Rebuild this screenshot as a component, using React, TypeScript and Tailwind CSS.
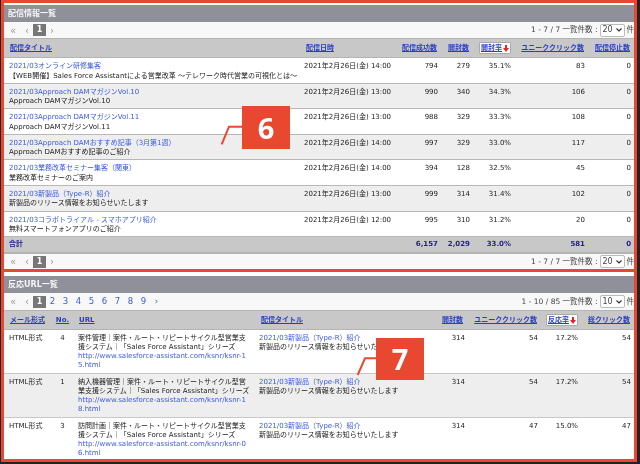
const font = { fontFamily: '"DejaVu Sans","Noto Sans CJK JP",sans-serif' };

const H = "text-[#2a3fc0] underline font-bold text-[7px] whitespace-nowrap";

function Pager({ pages, range, size, className }: { pages?: boolean; range: string; size: string; className: string }) {
  return (
    <div className={`${className} flex items-center bg-[#f8f8f8] text-[7.5px] text-[#444]`}>
      <span className="ml-[6px] w-[15px] text-[#999] text-[10px]">«</span>
      <span className="w-[8px] text-[#999] text-[10px]">‹</span>
      <span className="w-[13px] h-[12px] bg-[#777] text-white font-bold text-[8px] flex items-center justify-center">1</span>
      {pages ? (
        <div className="flex text-[#3a5be0] text-[8.5px]">
          {[2, 3, 4, 5, 6, 7, 8, 9].map((n) => (
            <span key={n} className="w-[13px] text-center">{n}</span>
          ))}
          <span className="w-[13px] text-center">›</span>
        </div>
      ) : (
        <span className="ml-[4px] text-[#999] text-[10px]">›</span>
      )}
      <span className="ml-auto whitespace-nowrap">{range} 一覧件数 :</span>
      <span className="ml-[2px] w-[25px] h-[13px] border border-[#bbb] rounded-[2px] bg-white flex items-center justify-between px-[2px] text-[8px]">
        {size}
        <svg width="6" height="4" viewBox="0 0 6 4"><path d="M0.5 0.5 L3 3 L5.5 0.5" fill="none" stroke="#333" strokeWidth="1.2" /></svg>
      </span>
      <span className="ml-[2px]">件</span>
    </div>
  );
}

function Sorted({ label }: { label: string }) {
  return (
    <span className="inline-flex items-center justify-center h-[12px] w-[32px] gap-[1px] border border-[#aaa] rounded-[1px] bg-white">
      <span className={H}>{label}</span>
      <svg width="6" height="7" viewBox="0 0 6 7"><path d="M2 0 H4 V3 H6 L3 7 L0 3 H2 Z" fill="#e8202a" /></svg>
    </span>
  );
}

function Bar({ title }: { title: string }) {
  return <div className="h-[17px] bg-[#90909a] text-[#f4f4f4] font-bold text-[8px] flex items-center pl-[4px]">{title}</div>;
}

const rows1 = [
  ["2021/03オンライン研修集客", "【WEB開催】Sales Force Assistantによる営業改革 ～テレワーク時代営業の可視化とは～", "14:00", "794", "279", "35.1%", "83"],
  ["2021/03Approach DAMマガジンVol.10", "Approach DAMマガジンVol.10", "13:00", "990", "340", "34.3%", "106"],
  ["2021/03Approach DAMマガジンVol.11", "Approach DAMマガジンVol.11", "13:00", "988", "329", "33.3%", "108"],
  ["2021/03Approach DAMおすすめ記事（3月第1週）", "Approach DAMおすすめ記事のご紹介", "14:00", "997", "329", "33.0%", "117"],
  ["2021/03業務改革セミナー集客（関東）", "業務改革セミナーのご案内", "14:00", "394", "128", "32.5%", "45"],
  ["2021/03新製品（Type-R）紹介", "新製品のリリース情報をお知らせいたします", "13:00", "999", "314", "31.4%", "102"],
  ["2021/03コラボトライアル - スマホアプリ紹介", "無料スマートフォンアプリのご紹介", "12:00", "995", "310", "31.2%", "20"],
];

const cols1 = "grid grid-cols-[298px_96px_40px_32px_41px_74px_49px]";

const rows2 = [
  ["HTML形式", "4", "案件管理｜案件・ルート・リピートサイクル型営業支援システム｜「Sales Force Assistant」シリーズ", "http://www.salesforce-assistant.com/ksnr/ksnr-15.html", "54", "17.2%", "54"],
  ["HTML形式", "1", "納入機器管理｜案件・ルート・リピートサイクル型営業支援システム｜「Sales Force Assistant」シリーズ", "http://www.salesforce-assistant.com/ksnr/ksnr-18.html", "54", "17.2%", "54"],
  ["HTML形式", "3", "訪問計画｜案件・ルート・リピートサイクル型営業支援システム｜「Sales Force Assistant」シリーズ", "http://www.salesforce-assistant.com/ksnr/ksnr-06.html", "47", "15.0%", "47"],
];

const cols2 = "grid grid-cols-[48px_21px_181px_165px_46px_73px_40px_56px]";

function Callout({ n, className, line }: { n: string; className: string; line: string }) {
  return (
    <div className={`absolute w-[48px] bg-[#e8482f] text-white font-bold text-[29px] flex items-center justify-center ${className}`} style={{ fontFamily: '"Noto Sans",sans-serif' }}>
      {n}
      <svg className="absolute left-[-24px] top-0" width="24" height="43" viewBox="0 0 24 43"><path d={line} fill="none" stroke="#e8482f" strokeWidth="2" /></svg>
    </div>
  );
}

export default function App() {
  return (
    <div className="relative w-[640px] h-[464px] overflow-hidden bg-white text-[7px] text-[#222] border-l border-r-[3px] border-b-2 border-[#222] flex flex-col blur-[0.25px]" style={font}>
      <section className="border-[3px] border-[#e8482f] pt-[2px] bg-white">
        <Bar title="配信情報一覧" />
        <Pager className="h-[16px]" range="1 - 7 / 7" size="20" />
        <div className={`${cols1} h-[20px] items-center bg-[#c8c8c8] border-y border-[#b4b4b4] text-right`}>
          <span className={`${H} text-left pl-[6px]`}>配信タイトル</span>
          <span className={`${H} text-left pl-[4px]`}>配信日時</span>
          <span className={`${H} pr-[1px]`}>配信成功数</span>
          <span className={`${H} pr-[1px]`}>開封数</span>
          <span className="flex justify-end"><Sorted label="開封率" /></span>
          <span className={`${H} pr-[1px]`}>ユニーククリック数</span>
          <span className={`${H} pr-[4px]`}>配信停止数</span>
        </div>
        {rows1.map((r, i) => (
          <div key={i} className={`${cols1} h-[25.6px] border-b border-[#b8b8b8] leading-[9.5px] pt-[4px] text-right ${i % 2 ? "bg-[#eeeeee]" : "bg-white"}`}>
            <div className="text-left pl-[5px] whitespace-nowrap">
              <div className="text-[#3a5be0]">{r[0]}</div>
              <div>{r[1]}</div>
            </div>
            <span className="text-left whitespace-nowrap pl-[2px]">2021年2月26日(金) {r[2]}</span>
            <span>{r[3]}</span>
            <span>{r[4]}</span>
            <span>{r[5]}</span>
            <span>{r[6]}</span>
            <span className="pr-[3px]">0</span>
          </div>
        ))}
        <div className={`${cols1} h-[17px] items-center bg-[#c8c8c8] border-b-2 border-[#b4b4b4] text-right font-bold text-[#1f1f8f]`}>
          <span className="text-left pl-[5px]">合計</span>
          <span />
          <span>6,157</span>
          <span>2,029</span>
          <span>33.0%</span>
          <span>581</span>
          <span className="pr-[3px]">0</span>
        </div>
        <Pager className="h-[15px]" range="1 - 7 / 7" size="20" />
      </section>
      <section className="flex-1 min-h-0 flex flex-col border-x-[3px] border-b-[3px] border-[#e8482f] pt-[4px] bg-white">
        <Bar title="反応URL一覧" />
        <Pager pages className="h-[17px]" range="1 - 10 / 85" size="10" />
        <div className={`${cols2} h-[20px] items-center bg-[#c8c8c8] border-y border-[#b4b4b4]`}>
          <span className={`${H} pl-[6px]`}>メール形式</span>
          <span className={`${H} text-center`}>No.</span>
          <span className={`${H} pl-[6px]`}>URL</span>
          <span className={`${H} pl-[7px]`}>配信タイトル</span>
          <span className={`${H} text-right pr-[2px]`}>開封数</span>
          <span className={`${H} text-right pr-[1px]`}>ユニーククリック数</span>
          <span className="flex justify-end"><Sorted label="反応率" /></span>
          <span className={`${H} text-right pr-[4px]`}>総クリック数</span>
        </div>
        {rows2.map((r, i) => (
          <div key={i} className={`${cols2} leading-[9px] pt-[4px] ${i === 2 ? "flex-1" : "h-[44px] border-b border-[#c8c8c8]"} ${i % 2 ? "bg-[#eeeeee]" : "bg-white"}`}>
            <span className="pl-[5px]">{r[0]}</span>
            <span className="text-center">{r[1]}</span>
            <div className="pl-[5px] pr-[3px] break-all">
              <div>{r[2]}</div>
              <div className="text-[#3a5be0]">{r[3]}</div>
            </div>
            <div className="pl-[5px] whitespace-nowrap">
              <div className="text-[#3a5be0]">2021/03新製品（Type-R）紹介</div>
              <div>新製品のリリース情報をお知らせいたします</div>
            </div>
            <span className="text-right">314</span>
            <span className="text-right">{r[4]}</span>
            <span className="text-right">{r[5]}</span>
            <span className="text-right pr-[3px]">{r[6]}</span>
          </div>
        ))}
      </section>
      <Callout n="6" className="left-[241px] top-[106px] h-[43px]" line="M3.7 38.3 L11 20.7 H24" />
      <Callout n="7" className="left-[375px] top-[338px] h-[42px]" line="M5.7 37 L13 20.3 H24" />
    </div>
  );
}
